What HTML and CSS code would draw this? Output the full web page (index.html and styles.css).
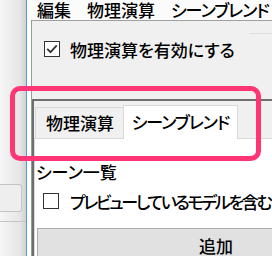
FILE: index.html
```html
<html>
    <head>
        <title>シーンブレンド</title>
        <link rel="stylesheet" href="styles.css">
    </head>

    <body>
        <div class="screen">
            <div class="sidePane">
                <div class="sideBox"></div>
                <div class="sideLine"></div>
            </div>

            <div class="mainWin">
                <div class="menuBar">
                    <span class="menuItem">編集</span>
                    <span class="menuItem">物理演算</span>
                    <span class="menuItem kana">シーンブレンド</span>
                </div>

                <div class="content">
                    <div class="physicsGroup">
                        <label class="checkRow">
                            <span class="checkBox">
                                <svg width="14" height="14" viewBox="0 0 14 14"><path d="M2.2 6.8 L5.5 10.2 L11.8 3.4" fill="none" stroke="#333" stroke-width="1.8"/></svg>
                            </span>
                            物理演算を有効にする
                        </label>
                        <div class="groupEdge"></div>
                    </div>

                    <div class="tabPanel">
                        <div class="tabStrip">
                            <div class="tab">物理演算</div>
                            <div class="tab active kana">シーンブレンド</div>
                        </div>
                        <div class="tabPage">
                            <div class="caption">シーン一覧</div>
                            <label class="checkRow sceneCheck">
                                <span class="checkBox"></span>
                                プレビューしているモデルを含む
                            </label>
                            <div class="button">追加</div>
                        </div>
                    </div>
                </div>
            </div>

            <div class="highlight"></div>
        </div>
    </body>
</html>
```

FILE: styles.css
```css
html, body {
    margin: 0;
    padding: 0;
}

body {
    width: 272px;
    height: 256px;
    overflow: hidden;
    background: #fff;
    color: #000;
    font-family: "Noto Sans CJK JP", sans-serif;
    font-size: 17px;
    font-weight: 500;
    font-feature-settings: "palt";
}

.kana {
    letter-spacing: -1px;
}

.screen {
    position: relative;
    display: flex;
    width: 400px;
    height: 256px;
}

.sidePane {
    width: 26px;
    border-right: 1px solid #4d9be4;
    background: linear-gradient(to right, #f6f6f6, #e6e6e6 75%, #d2d2d2);
    display: flex;
    flex-direction: column;
}

.sideBox {
    margin-top: 184px;
    width: 21px;
    height: 26px;
    border: 1px solid #c4c4c4;
    border-left: none;
    border-radius: 0 3px 3px 0;
    background: #eeeeee;
}

.sideLine {
    margin-top: 9px;
    border-top: 1px solid #c4c4c4;
}

.mainWin {
    flex: 1;
    display: flex;
    flex-direction: column;
    background: #fff;
}

.menuBar {
    height: 24px;
    line-height: 20px;
    padding-left: 2px;
    display: flex;
    white-space: nowrap;
    background: #fbfbfb;
}

.menuItem {
    padding: 0 8px;
}

.content {
    flex: 1;
    margin-left: 4px;
    border-top: 1px solid #a0a0a0;
    border-left: 1px solid #9a9a9a;
    background: #f0f0f0;
    display: flex;
    flex-direction: column;
}

.physicsGroup {
    height: 78px;
    box-sizing: border-box;
    padding: 18px 0 0 12px;
    display: flex;
    align-items: flex-start;
}

.groupEdge {
    margin: -6px 0 0 14px;
    flex: 1;
    border-top: 1px solid #dcdcdc;
}

.checkRow {
    display: flex;
    align-items: center;
    height: 20px;
    white-space: nowrap;
}

.checkBox {
    width: 14px;
    height: 14px;
    margin-right: 10px;
    border: 1px solid #333;
    background: #fff;
    display: flex;
}

.tabPanel {
    flex: 1;
    border-top: 2px solid #6e6e6e;
    border-left: 2px solid #6e6e6e;
    display: flex;
    flex-direction: column;
    overflow: hidden;
}

.tabStrip {
    height: 37px;
    padding-left: 1px;
    display: flex;
    align-items: flex-end;
}

.tab {
    width: 90px;
    height: 31px;
    box-sizing: border-box;
    border: 1px solid #d9d9d9;
    border-bottom: none;
    background: #f0f0f0;
    line-height: 30px;
    text-align: center;
    white-space: nowrap;
}

.tab.active {
    position: relative;
    z-index: 1;
    width: 115px;
    height: 34px;
    margin-left: -2px;
    margin-bottom: -1px;
    background: #fff;
    line-height: 32px;
}

.tabPage {
    flex: 1;
    margin-right: 2px;
    padding: 22px 1px 0 1px;
    border: 1px solid #d9d9d9;
    background: #fff;
}

.caption {
    line-height: 22px;
    white-space: nowrap;
}

.sceneCheck {
    margin: 8px 0 0 7px;
    letter-spacing: -2.3px;
}

.sceneCheck .checkBox {
    margin-right: 11px;
}

.button {
    margin: 17px 1px 0 1px;
    height: 36px;
    border: 1px solid #adadad;
    background: #e1e1e1;
    line-height: 34px;
    text-align: center;
}

.highlight {
    position: absolute;
    left: 10px;
    top: 86px;
    width: 251px;
    height: 75px;
    box-sizing: border-box;
    border: 5px solid #ff3575;
    border-radius: 10px;
}
```
